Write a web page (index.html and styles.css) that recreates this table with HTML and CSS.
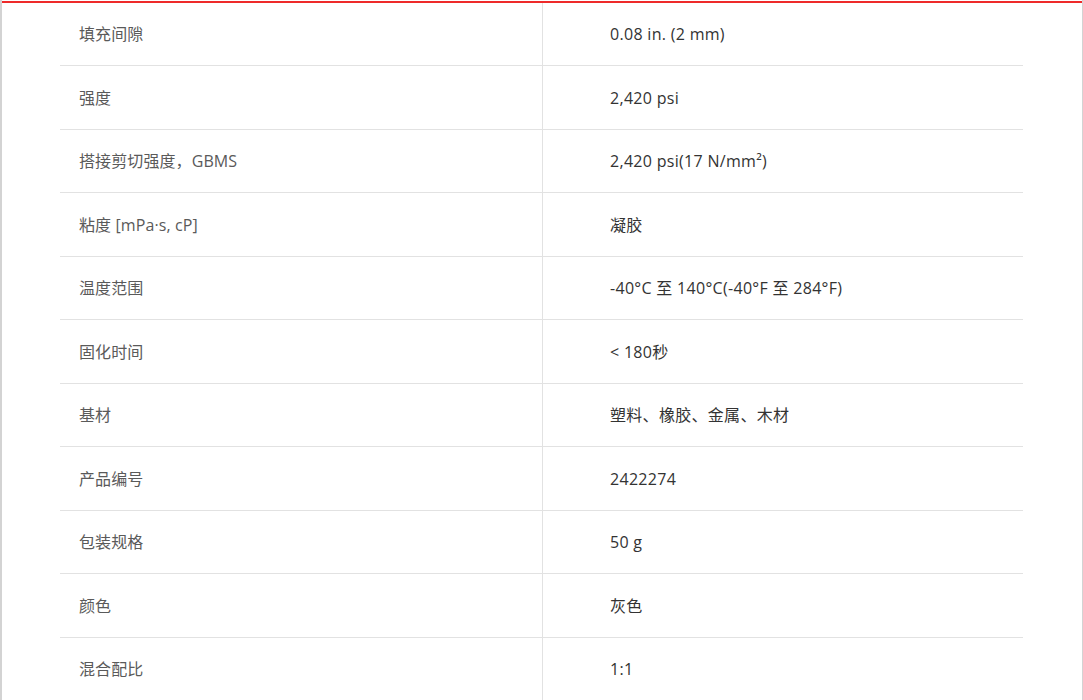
FILE: index.html
```html
<!DOCTYPE html>
<html lang="zh-CN">
<head>
<meta charset="utf-8">
<title>规格参数</title>
<link rel="stylesheet" href="styles.css">
</head>
<body>
<div class="frame">
  <div class="panel">
    <div class="specs">
      <div class="row"><div class="label">填充间隙</div><div class="value">0.08 in. (2 mm)</div></div>
      <div class="row"><div class="label">强度</div><div class="value">2,420 psi</div></div>
      <div class="row"><div class="label">搭接剪切强度，GBMS</div><div class="value">2,420 psi(17 N/mm²)</div></div>
      <div class="row"><div class="label">粘度 [mPa·s, cP]</div><div class="value">凝胶</div></div>
      <div class="row"><div class="label">温度范围</div><div class="value">-40°C 至 140°C(-40°F 至 284°F)</div></div>
      <div class="row"><div class="label">固化时间</div><div class="value">&lt; 180秒</div></div>
      <div class="row"><div class="label">基材</div><div class="value">塑料、橡胶、金属、木材</div></div>
      <div class="row"><div class="label">产品编号</div><div class="value">2422274</div></div>
      <div class="row"><div class="label">包装规格</div><div class="value">50 g</div></div>
      <div class="row"><div class="label">颜色</div><div class="value">灰色</div></div>
      <div class="row"><div class="label">混合配比</div><div class="value">1:1</div></div>
    </div>
  </div>
</div>
</body>
</html>
```
FILE: styles.css
```css
html, body {
  margin: 0;
  padding: 0;
  background: #ffffff;
}
body {
  font-family: "Open Sans", "Noto Sans CJK SC", sans-serif;
  font-size: 16px;
  overflow: hidden;
}
.frame {
  height: 100vh;
  box-sizing: border-box;
  border-left: 2px solid #d3d3d3;
  border-right: 1px solid #d3d3d3;
  padding-top: 1px;
}
.panel {
  border-top: 2px solid #ee2a2a;
  padding: 0 59px 0 58px;
}
.specs {
  display: flex;
  flex-direction: column;
  margin-top: -0.5px;
}
.row {
  display: grid;
  grid-template-columns: 482px 1fr;
  height: 63.5px;
  box-sizing: border-box;
  border-bottom: 1px solid #e2e2e2;
}
.label, .value {
  display: flex;
  align-items: center;
  line-height: 20px;
  padding-top: 1px;
}
.label {
  padding-left: 19px;
  color: #5a5a5a;
  letter-spacing: 0.1px;
}
.value {
  border-left: 1px solid #e2e2e2;
  padding-left: 67px;
  color: #333333;
  letter-spacing: 0.3px;
}
```
